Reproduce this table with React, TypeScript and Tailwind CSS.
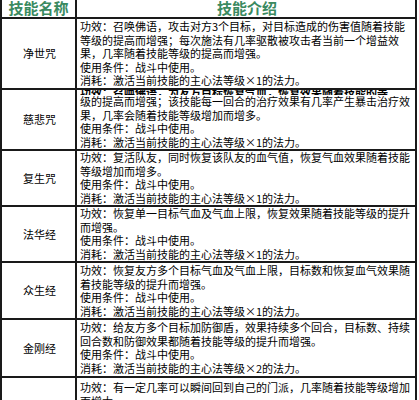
import React from "react";

const X = ({ n }: { n: string }) => (
  <>
    <span className="inline-block w-[1em] text-center">×</span>
    {n}
  </>
);

type Row = { name: string; lines: React.ReactNode[]; cls: string; cut?: boolean };

const cost = (n: string) => (
  <>
    消耗：激活当前技能的主心法等级<X n={n} />的法力。
  </>
);

const rows: Row[] = [
  {
    name: "净世咒",
    cls: "h-[69px] pt-[1px]",
    lines: [
      "功效：召唤佛语，攻击对方3个目标，对目标造成的伤害值随着技能",
      "等级的提高而增强；每次施法有几率驱散被攻击者当前一个增益效",
      "果，几率随着技能等级的提高而增强。",
      "使用条件：战斗中使用。",
      cost("1"),
    ],
  },
  {
    name: "慈悲咒",
    cls: "h-[59px]",
    cut: true,
    lines: [
      "级的提高而增强；该技能每一回合的治疗效果有几率产生暴击治疗效",
      "果，几率会随着技能等级增加而增多。",
      "使用条件：战斗中使用。",
      cost("1"),
    ],
  },
  {
    name: "复生咒",
    cls: "h-[54px]",
    lines: [
      "功效：复活队友，同时恢复该队友的血气值，恢复气血效果随着技能",
      "等级增加而增多。",
      "使用条件：战斗中使用。",
      cost("1"),
    ],
  },
  {
    name: "法华经",
    cls: "h-[54px]",
    lines: [
      "功效：恢复单一目标气血及气血上限，恢复效果随着技能等级的提升",
      "而增强。",
      "使用条件：战斗中使用。",
      cost("1"),
    ],
  },
  {
    name: "众生经",
    cls: "h-[55px] pt-[1px]",
    lines: [
      "功效：恢复友方多个目标气血及气血上限，目标数和恢复血气效果随",
      "着技能等级的提升而增强。",
      "使用条件：战斗中使用。",
      cost("1"),
    ],
  },
  {
    name: "金刚经",
    cls: "h-[56px] pt-[1px]",
    lines: [
      "功效：给友方多个目标加防御盾，效果持续多个回合，目标数、持续",
      "回合数和防御效果都随着技能等级的提升而增强。",
      "使用条件：战斗中使用。",
      cost("2"),
    ],
  },
  {
    name: "",
    cls: "h-[60px] pt-[3px]",
    lines: ["功效：有一定几率可以瞬间回到自己的门派，几率随着技能等级增加", "而增大。"],
  },
];

export default function App() {
  return (
    <div
      className="w-[419px] h-[400px] overflow-hidden bg-white text-black"
      style={{ fontFamily: '"Noto Sans CJK SC", "Noto Sans", sans-serif' }}
    >
      <div className="w-[417px] border-l-2 border-r-2 border-[#1a1a1a]">
        <div className="flex h-[19px] border-b-2 border-[#1a1a1a]">
          <div className="w-[75px] shrink-0 border-r-2 border-[#1a1a1a] flex items-center justify-center text-[15px] leading-[15px] font-semibold text-[#3a8a60] -mt-[2px]">
            技能名称
          </div>
          <div className="flex-1 flex items-center justify-center text-[15px] leading-[15px] font-semibold text-[#3a8a60] -mt-[2px] pl-[2px]">
            技能介绍
          </div>
        </div>
        {rows.map((r, i) => (
          <div key={i} className="flex border-b-2 border-[#1a1a1a]">
            <div className="w-[75px] shrink-0 border-r-2 border-[#1a1a1a] flex items-center justify-center text-[11px] pl-[2px]">
              {r.name}
            </div>
            <div className={`flex-1 pl-[3px] overflow-hidden text-[11px] leading-[13.5px] whitespace-nowrap ${r.cls}`}>
              {r.cut && (
                <div className="h-[5px] overflow-hidden font-bold text-[11px] leading-[5px] text-black">
                  功效：召唤佛语，为友方目标恢复气血，恢复效果随着技能的等
                </div>
              )}
              {r.lines.map((l, j) => (
                <div key={j}>{l}</div>
              ))}
            </div>
          </div>
        ))}
      </div>
    </div>
  );
}
